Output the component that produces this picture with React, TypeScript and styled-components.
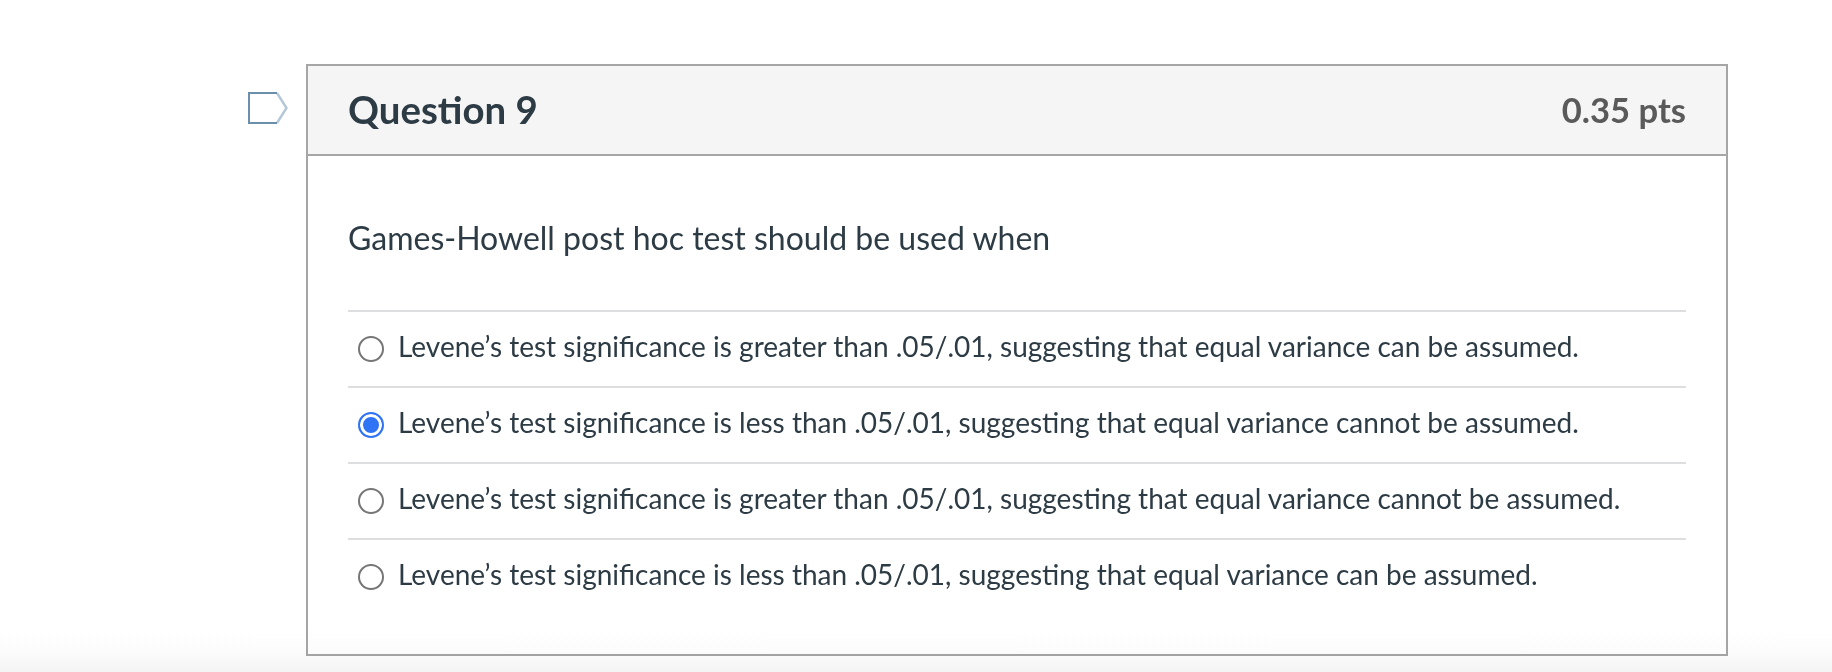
import React from 'react';
import styled, { createGlobalStyle } from 'styled-components';

const GlobalStyle = createGlobalStyle`
  html, body {
    margin: 0;
    padding: 0;
    background: #fff;
  }
`;

const Page = styled.div`
  position: relative;
  width: 1832px;
  height: 672px;
  overflow: hidden;
  box-sizing: border-box;
  padding: 64px 0 0 248px;
  display: flex;
  align-items: flex-start;
  gap: 18px;
  font-family: Lato, "Liberation Sans", sans-serif;
  color: #2d3b45;
`;

const BottomFade = styled.div`
  position: absolute;
  left: 0;
  right: 0;
  bottom: 0;
  height: 44px;
  background: linear-gradient(to bottom, #fff, #fcfcfc 55%, #f4f4f4);
  mix-blend-mode: multiply;
  pointer-events: none;
`;

const FlagIcon = styled.svg`
  flex: none;
  width: 40px;
  height: 32px;
  margin-top: 28px;
`;

const Card = styled.section`
  box-sizing: border-box;
  width: 1422px;
  height: 592px;
  border: 2px solid #a6a6a6;
`;

const CardHeader = styled.header`
  box-sizing: border-box;
  height: 90px;
  padding: 0 40px 2px;
  display: flex;
  align-items: center;
  justify-content: space-between;
  background: #f5f5f5;
  border-bottom: 2px solid #a6a6a6;
`;

const Title = styled.h2`
  margin: 0;
  font-size: 38.4px;
  font-weight: 700;
  color: #2d3b45;
`;

const Points = styled.div`
  font-size: 34.6px;
  font-weight: 700;
  color: #5a5a5a;
`;

const CardBody = styled.div`
  padding: 0 40px;
`;

const Prompt = styled.p`
  margin: 0;
  height: 154px;
  padding-top: 62px;
  box-sizing: border-box;
  font-size: 32px;
  line-height: 40px;
`;

const Answer = styled.label`
  box-sizing: border-box;
  height: 76px;
  display: flex;
  align-items: center;
  gap: 14px;
  padding: 0 0 6px 10px;
  border-top: 2px solid #dcdedf;
  font-size: 28px;
`;

const Radio = styled.span<{ $checked?: boolean }>`
  flex: none;
  box-sizing: border-box;
  width: 26px;
  height: 26px;
  margin-top: 6px;
  border-radius: 50%;
  border: 2px solid ${(p) => (p.$checked ? '#2f74f5' : '#767676')};
  background: ${(p) => (p.$checked ? '#2f74f5' : '#fff')};
  box-shadow: ${(p) => (p.$checked ? 'inset 0 0 0 3px #fff' : 'none')};
`;

const answers = [
  { text: 'Levene’s test significance is greater than .05/.01, suggesting that equal variance can be assumed.' },
  { text: 'Levene’s test significance is less than .05/.01, suggesting that equal variance cannot be assumed.', checked: true },
  { text: 'Levene’s test significance is greater than .05/.01, suggesting that equal variance cannot be assumed.' },
  { text: 'Levene’s test significance is less than .05/.01, suggesting that equal variance can be assumed.' },
];

const App: React.FC = () => {
  return (
    <Page>
      <GlobalStyle />
      <FlagIcon viewBox="0 0 40 32" fill="none">
        <path d="M29 1 L38.5 16 L29 31" stroke="#b4c7d8" strokeWidth="2.4" />
        <path d="M29 1 H1 V31 H29" stroke="#6b8fad" strokeWidth="2" />
      </FlagIcon>
      <Card>
        <CardHeader>
          <Title>Question 9</Title>
          <Points>0.35 pts</Points>
        </CardHeader>
        <CardBody>
          <Prompt>Games-Howell post hoc test should be used when</Prompt>
          {answers.map((a, i) => (
            <Answer key={i}>
              <Radio $checked={a.checked} />
              {a.text}
            </Answer>
          ))}
        </CardBody>
      </Card>
      <BottomFade />
    </Page>
  );
};

export default App;
